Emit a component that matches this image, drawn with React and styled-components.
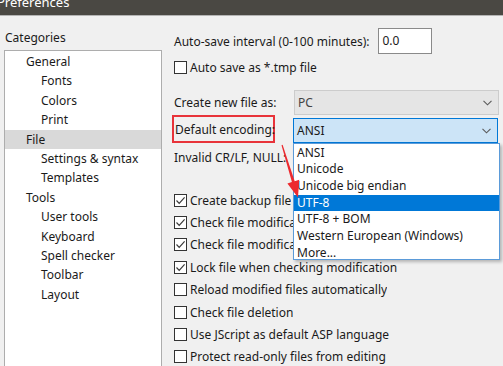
import React from "react";
import styled, { createGlobalStyle } from "styled-components";

const GlobalStyle = createGlobalStyle`
  html, body {
    margin: 0;
    padding: 0;
    background: #f0f0f0;
  }
  body {
    font-family: "Noto Sans", "Open Sans", sans-serif;
    font-size: 12px;
    color: #1a1a1a;
  }
`;

export const Window = styled.div`
  position: relative;
  width: 503px;
  height: 366px;
  overflow: hidden;
  background: #f0f0f0;
`;

export const TitleBar = styled.div`
  height: 15px;
  background: #4a4843;
  border-bottom: 1px solid #b4b4b4;
  overflow: hidden;
`;

export const Title = styled.div`
  margin: -6px 0 0 -3px;
  color: #ffffff;
  font-size: 13px;
  line-height: 16px;
`;

export const Body = styled.div`
  display: flex;
`;

export const Side = styled.div`
  width: 166px;
  flex-shrink: 0;
  padding-left: 4px;
  box-sizing: border-box;
`;

export const SideLabel = styled.div`
  height: 34px;
  line-height: 16px;
  padding: 14px 0 0 1px;
  box-sizing: border-box;
`;

export const Tree = styled.div`
  width: 158px;
  height: 330px;
  background: #ffffff;
  border: 1px solid #adadad;
  box-sizing: border-box;
  padding-top: 1px;
`;

export const TreeItem = styled.div`
  height: 19.4px;
  line-height: 19.4px;
  padding-left: ${p => (p.$child ? 36 : 21)}px;
  background: ${p => (p.$selected ? "#d9d9d9" : "transparent")};
  white-space: nowrap;
`;

export const Main = styled.div`
  position: relative;
  flex: 1;
  padding: 12px 0 0 8px;
`;

export const Row = styled.div`
  display: flex;
  align-items: center;
  height: ${p => p.$h || 22}px;
  margin-top: ${p => p.$mt || 0}px;
  white-space: nowrap;
`;

// text that runs under the open drop-down is clipped at its left edge
export const Text = styled.span`
  display: block;
  overflow: hidden;
  max-width: ${p => (p.$max ? `${p.$max}px` : "none")};
`;

export const FieldLabel = styled.div`
  width: 120px;
  flex-shrink: 0;
`;

export const MarkedLabel = styled.div`
  width: 103px;
  height: 28px;
  margin: 0 18px 0 -2px;
  padding-left: 1px;
  border: 2px solid #e8333a;
  box-sizing: border-box;
  display: flex;
  align-items: center;
  flex-shrink: 0;
`;

export const NumberBox = styled.div`
  width: 54px;
  height: 26px;
  margin-left: 9px;
  border: 1px solid #8a8a8a;
  background: #ffffff;
  box-sizing: border-box;
  padding-left: 3px;
  line-height: 24px;
`;

export const Select = styled.div`
  position: relative;
  width: 205px;
  height: 25px;
  box-sizing: border-box;
  display: flex;
  align-items: center;
  justify-content: space-between;
  padding: 0 6px 0 3px;
  border: 1px solid ${p => (p.$focused ? "#0078d7" : "#cccccc")};
  background: ${p => (p.$focused ? "#cce4f7" : "#e5e5e5")};
  color: ${p => (p.$focused ? "#1a1a1a" : "#444444")};
  align-self: ${p => (p.$focused ? "flex-end" : "center")};
`;

export const DropList = styled.div`
  position: absolute;
  top: 24px;
  left: -1px;
  width: 207px;
  height: 117px;
  box-sizing: border-box;
  background: #ffffff;
  border: 1px solid #5b9bd9;
  box-shadow: 2px 2px 3px rgba(0, 0, 0, 0.25);
  padding-top: 0.5px;
  z-index: 2;
`;

export const Option = styled.div`
  height: 16.7px;
  line-height: 16.7px;
  padding-left: 3px;
  background: ${p => (p.$active ? "#0078d7" : "transparent")};
  color: ${p => (p.$active ? "#ffffff" : "#1a1a1a")};
`;

export const Box = styled.span`
  width: 13px;
  height: 13px;
  box-sizing: border-box;
  border: 1px solid #333333;
  background: #ffffff;
  margin-right: 3px;
  flex-shrink: 0;
  display: flex;
  align-items: center;
  justify-content: center;
`;

export const Arrow = styled.svg`
  position: absolute;
  left: 0;
  top: 0;
  pointer-events: none;
  z-index: 5;
`;

const Chevron = () => (
  <svg width="9" height="6" viewBox="0 0 9 6">
    <polyline points="0.5,0.8 4.5,4.8 8.5,0.8" fill="none" stroke="#5a5a5a" strokeWidth="1.1" />
  </svg>
);

const Check = ({ on, max, children }) => (
  <Row $h={22.4}>
    <Box>
      {on && (
        <svg width="11" height="11" viewBox="0 0 11 11">
          <polyline points="1.5,5.5 4.2,8.3 9.6,2.4" fill="none" stroke="#3a3a3a" strokeWidth="1.2" />
        </svg>
      )}
    </Box>
    <Text $max={max}>{children}</Text>
  </Row>
);

const tree = [
  ["General"],
  ["Fonts", true],
  ["Colors", true],
  ["Print", true],
  ["File", false, true],
  ["Settings & syntax", true],
  ["Templates", true],
  ["Tools"],
  ["User tools", true],
  ["Keyboard", true],
  ["Spell checker", true],
  ["Toolbar", true],
  ["Layout", true],
];

const encodings = [
  "ANSI",
  "Unicode",
  "Unicode big endian",
  "UTF-8",
  "UTF-8 + BOM",
  "Western European (Windows)",
  "More...",
];

const checks = [
  ["Create backup file", true, 103],
  ["Check file modification", true, 103],
  ["Check file modification", true, 103],
  ["Lock file when checking modification", true],
  ["Reload modified files automatically", false],
  ["Check file deletion", false],
  ["Use JScript as default ASP language", false],
  ["Protect read-only files from editing", false],
];

export default function App() {
  return (
    <Window>
      <GlobalStyle />
      <TitleBar>
        <Title>Preferences</Title>
      </TitleBar>
      <Body>
        <Side>
          <SideLabel>Categories</SideLabel>
          <Tree>
            {tree.map(([name, child, selected]) => (
              <TreeItem key={name} $child={child} $selected={selected}>
                {name}
              </TreeItem>
            ))}
          </Tree>
        </Side>
        <Main>
          <Row $h={26}>
            Auto-save interval (0-100 minutes):
            <NumberBox>0.0</NumberBox>
          </Row>
          <Row $mt={2}>
            <Box />
            Auto save as *.tmp file
          </Row>
          <Row $h={25} $mt={12}>
            <FieldLabel>Create new file as:</FieldLabel>
            <Select>
              PC
              <Chevron />
            </Select>
          </Row>
          <Row $h={28}>
            <MarkedLabel>Default encoding:</MarkedLabel>
            <Select $focused>
              ANSI
              <Chevron />
              <DropList>
                {encodings.map(e => (
                  <Option key={e} $active={e === "UTF-8"}>
                    {e}
                  </Option>
                ))}
              </DropList>
            </Select>
          </Row>
          <Row $h={20} $mt={4}>
            <Text $max={119}>Invalid CR/LF, NULL:</Text>
          </Row>
          <div style={{ height: 22 }} />
          {checks.map(([label, on, max], i) => (
            <Check key={i} on={on} max={max}>
              {label}
            </Check>
          ))}
        </Main>
      </Body>
      <Arrow width="503" height="366" viewBox="0 0 503 366">
        <polygon
          points="281.5,145.2 282.6,144.8 294.7,181.3 299.2,179.8 298,197.5 287.4,183.6 291.9,182.1"
          fill="#ec2a2f"
        />
      </Arrow>
    </Window>
  );
}
